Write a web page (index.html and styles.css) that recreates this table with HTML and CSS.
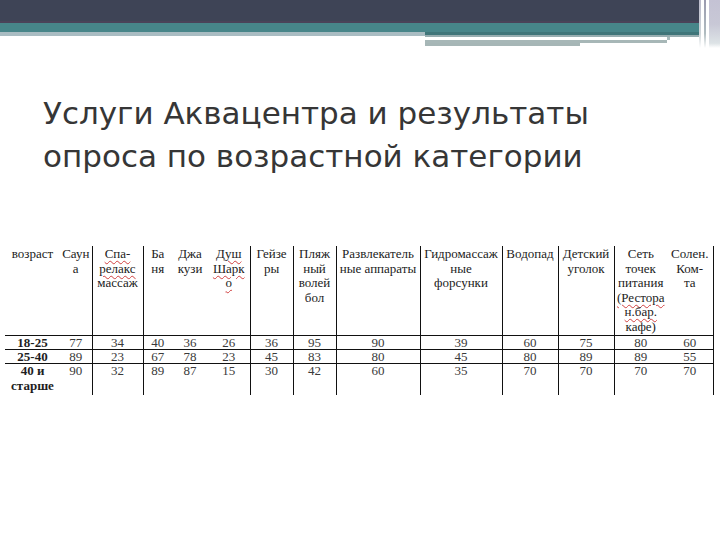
FILE: index.html
```html
<!DOCTYPE html>
<html lang="ru">
<head>
<meta charset="utf-8">
<title>Услуги Аквацентра</title>
<link rel="stylesheet" href="styles.css">
</head>
<body>
<header class="top">
  <div class="top-main">
    <div class="band-dark"></div>
    <div class="band-teal"></div>
    <div class="under">
      <div class="under-left"></div>
      <div class="under-right">
        <div class="ur-teal"></div>
        <div class="ur-gray"></div>
        <div class="ur-white"></div>
        <div class="ur-line1"></div>
        <div class="ur-line2"></div>
      </div>
    </div>
  </div>
  <div class="top-edge">
    <div class="edge-line a"></div>
    <div class="edge-line b"></div>
    <div class="edge-fill"></div>
  </div>
</header>

<h1 class="title">Услуги Аквацентра и результаты<br>опроса по возрастной категории</h1>

<table class="survey">
  <colgroup>
    <col style="width:55px"><col style="width:32px"><col style="width:51px"><col style="width:29px">
    <col style="width:36px"><col style="width:42px"><col style="width:43px"><col style="width:43px">
    <col style="width:84px"><col style="width:82px"><col style="width:56px"><col style="width:56px">
    <col style="width:53px"><col style="width:46px">
  </colgroup>
  <thead>
    <tr>
      <th>возраст</th>
      <th class="vr">Саун<br>а</th>
      <th class="vr"><span class="sp">Спа-<br>релакс</span><br>массаж</th>
      <th>Ба<br>ня</th>
      <th>Джа<br>кузи</th>
      <th class="vr"><span class="sp">Душ<br>Шарк<br>о</span></th>
      <th class="vr">Гейзе<br>ры</th>
      <th class="vr">Пляж<br>ный<br>волей<br>бол</th>
      <th class="vr">Развлекатель<br>ные аппараты</th>
      <th class="vr">Гидромассаж<br>ные<br>форсунки</th>
      <th class="vr">Водопад</th>
      <th class="vr">Детский<br>уголок</th>
      <th>Сеть<br>точек<br>питания<br><span class="sp">(Рестора<br>н.бар.</span><br>кафе)</th>
      <th class="vr">Солен.<br>Ком-<br>та</th>
    </tr>
  </thead>
  <tbody>
    <tr>
      <td class="age">18-25</td><td class="vr">77</td><td class="vr">34</td><td>40</td><td>36</td><td class="vr">26</td><td class="vr">36</td><td class="vr">95</td><td class="vr">90</td><td class="vr">39</td><td class="vr">60</td><td class="vr">75</td><td>80</td><td class="vr">60</td>
    </tr>
    <tr>
      <td class="age">25-40</td><td class="vr">89</td><td class="vr">23</td><td>67</td><td>78</td><td class="vr">23</td><td class="vr">45</td><td class="vr">83</td><td class="vr">80</td><td class="vr">45</td><td class="vr">80</td><td class="vr">89</td><td>89</td><td class="vr">55</td>
    </tr>
    <tr class="last">
      <td class="age">40 и<br>старше</td><td class="vr">90</td><td class="vr">32</td><td>89</td><td>87</td><td class="vr">15</td><td class="vr">30</td><td class="vr">42</td><td class="vr">60</td><td class="vr">35</td><td class="vr">70</td><td class="vr">70</td><td>70</td><td class="vr">70</td>
    </tr>
  </tbody>
</table>
</body>
</html>
```

FILE: styles.css
```css
html, body {
  margin: 0;
  padding: 0;
  background: #ffffff;
}
body {
  width: 720px;
  height: 540px;
  overflow: hidden;
}

/* decorative header */
.top {
  display: flex;
  height: 48px;
}
.top-main {
  flex: 1;
  display: flex;
  flex-direction: column;
}
.band-dark {
  height: 21px;
  background: #3e4456;
  border-bottom: 2px solid #4a4258;
}
.band-teal {
  height: 9px;
  background: #478589;
}
.under {
  display: flex;
  height: 16px;
}
.under-left {
  width: 425px;
  height: 4px;
  background: #a9bcc2;
}
.under-right {
  flex: 1;
  display: flex;
  flex-direction: column;
}
.ur-teal {
  height: 3px;
  background: #3f7579;
}
.ur-gray {
  height: 2px;
  background: #97adb0;
}
.ur-white {
  height: 3px;
  width: 242px;
  background: #ffffff;
  border-right: 3px solid #a8bcbd;
}
.ur-line1 {
  height: 3px;
  width: 242px;
  background: #a7b7b7;
}
.ur-line2 {
  height: 3px;
  width: 155px;
  background: #a6b6b6;
}
.top-edge {
  width: 21px;
  display: flex;
}
.edge-line {
  width: 2px;
  margin-right: 3px;
  background: linear-gradient(#bcbccc, #cfd6da 70%, #ffffff);
}
.edge-line.b {
  background: linear-gradient(#9a9aae, #b0bcc0 70%, #ffffff);
}
.edge-fill {
  flex: 1;
  background: linear-gradient(#c4c2d4, #c8c8d6 50%, #dde3e6 90%, #ffffff);
}

/* title */
.title {
  margin: 44px 0 0 43px;
  font-family: "DejaVu Sans", "Open Sans", sans-serif;
  font-weight: normal;
  font-size: 31px;
  line-height: 43px;
  color: #363636;
  letter-spacing: 0;
}

/* table */
.survey {
  margin: 68px 0 0 5px;
  border-collapse: collapse;
  table-layout: fixed;
  width: 708px;
  font-family: "Liberation Serif", "Times New Roman", serif;
  font-size: 13px;
  line-height: 14.6px;
  color: #222222;
}
.survey th {
  font-weight: normal;
  vertical-align: top;
  text-align: center;
  padding: 1px 0 0 0;
  height: 88px;
  border-bottom: 1px solid #111111;
  white-space: nowrap;
}
.survey td {
  text-align: center;
  vertical-align: top;
  padding: 0;
  height: 13px;
  line-height: 13px;
  color: #3a3a3a;
  border-bottom: 1px solid #111111;
}
.survey tr.last td {
  border-bottom: none;
  height: 31px;
  line-height: 14.5px;
}
.survey td.age {
  font-weight: bold;
  color: #1e1e1e;
}
.survey .vr {
  border-right: 1px solid #111111;
}
.sp {
  text-decoration: underline wavy #d04040;
  text-decoration-thickness: 1px;
  text-underline-offset: 2px;
}
```
